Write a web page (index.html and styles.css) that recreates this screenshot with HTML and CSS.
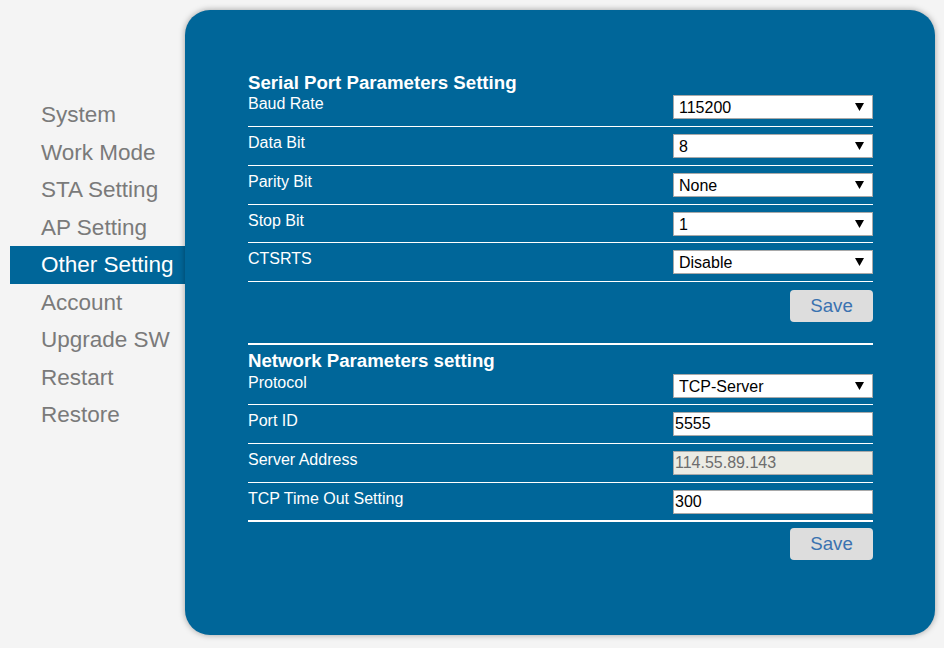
FILE: index.html
```html
<!DOCTYPE html>
<html>
<head>
<meta charset="utf-8">
<title>Other Setting</title>
<link rel="stylesheet" href="styles.css">
</head>
<body>
<div class="page">
  <nav class="nav">
    <a class="nav-item">System</a>
    <a class="nav-item">Work Mode</a>
    <a class="nav-item">STA Setting</a>
    <a class="nav-item">AP Setting</a>
    <a class="nav-item active">Other Setting</a>
    <a class="nav-item">Account</a>
    <a class="nav-item">Upgrade SW</a>
    <a class="nav-item">Restart</a>
    <a class="nav-item">Restore</a>
  </nav>
  <main class="panel">
    <section class="section">
      <h2 class="heading">Serial Port Parameters Setting</h2>
      <div class="row first">
        <span class="label">Baud Rate</span>
        <select class="field select"><option>115200</option></select>
      </div>
      <div class="row">
        <span class="label">Data Bit</span>
        <select class="field select"><option>8</option></select>
      </div>
      <div class="row">
        <span class="label">Parity Bit</span>
        <select class="field select"><option>None</option></select>
      </div>
      <div class="row short">
        <span class="label">Stop Bit</span>
        <select class="field select"><option>1</option></select>
      </div>
      <div class="row">
        <span class="label">CTSRTS</span>
        <select class="field select"><option>Disable</option></select>
      </div>
      <div class="actions"><button class="save">Save</button></div>
    </section>
    <section class="section second">
      <h2 class="heading">Network Parameters setting</h2>
      <div class="row first short">
        <span class="label">Protocol</span>
        <select class="field select"><option>TCP-Server</option></select>
      </div>
      <div class="row">
        <span class="label">Port ID</span>
        <input class="field input" type="text" value="5555">
      </div>
      <div class="row">
        <span class="label">Server Address</span>
        <input class="field input" type="text" value="114.55.89.143" disabled>
      </div>
      <div class="row last">
        <span class="label">TCP Time Out Setting</span>
        <input class="field input" type="text" value="300">
      </div>
      <div class="actions"><button class="save">Save</button></div>
    </section>
  </main>
</div>
</body>
</html>
```

FILE: styles.css
```css
html, body {
  margin: 0;
  padding: 0;
  background: #f4f4f4;
  font-family: "Liberation Sans", Arial, sans-serif;
}

.page {
  display: flex;
  align-items: flex-start;
  width: 944px;
  height: 648px;
}

.nav {
  width: 175px;
  margin-left: 10px;
  padding-top: 96px;
  display: flex;
  flex-direction: column;
}

.nav-item {
  display: block;
  height: 37.5px;
  line-height: 37px;
  padding-left: 31px;
  font-size: 22.5px;
  color: #7a7a7a;
  text-decoration: none;
  white-space: nowrap;
}

.nav-item.active {
  background: #006699;
  color: #ffffff;
}

.panel {
  box-sizing: border-box;
  width: 750px;
  height: 625px;
  margin-top: 10px;
  padding: 62px 62px 0 63px;
  background: #006699;
  border-radius: 25px;
  box-shadow: 0 0 6px rgba(0, 0, 0, 0.35);
  color: #ffffff;
}

.section.second {
  border-top: 2px solid #ffffff;
  padding-top: 5px;
}

.heading {
  margin: 0;
  font-size: 18.67px;
  line-height: 22px;
  font-weight: bold;
}

.row {
  display: flex;
  justify-content: space-between;
  align-items: flex-start;
  padding: 7px 0 7px;
  border-bottom: 1px solid #ffffff;
}

.row.first {
  padding-top: 1px;
}

.row.short {
  padding-bottom: 6px;
}

.section.second .row.first {
  padding-top: 2px;
}

.row.last {
  border-bottom-width: 2px;
  padding-bottom: 6px;
}

.label {
  font-size: 16px;
  line-height: 18px;
}

.field {
  box-sizing: border-box;
  width: 200px;
  height: 24px;
  margin: 0;
  border: 1px solid #a9a9a9;
  border-radius: 0;
  background-color: #ffffff;
  font-family: "Liberation Sans", Arial, sans-serif;
  font-size: 16px;
  color: #000000;
  outline: none;
}

.select {
  -webkit-appearance: none;
  appearance: none;
  padding: 0 20px 0 5px;
  background-image: url("data:image/svg+xml;utf8,<svg xmlns='http://www.w3.org/2000/svg' width='9' height='8'><path d='M0 0 H9 L4.5 8 Z' fill='black'/></svg>");
  background-repeat: no-repeat;
  background-position: right 8px center;
}

.input {
  padding: 0 1px;
}

.input:disabled {
  background: #ebebe4;
  color: #6d6d6d;
}

.actions {
  display: flex;
  justify-content: flex-end;
  padding: 8px 0 21px;
}

.section.second .actions {
  padding-top: 6px;
}

.save {
  width: 83px;
  height: 32px;
  border: none;
  border-radius: 4px;
  background: #dddddd;
  color: #3a72b0;
  font-family: "Liberation Sans", Arial, sans-serif;
  font-size: 18.67px;
  padding: 0;
}
```
